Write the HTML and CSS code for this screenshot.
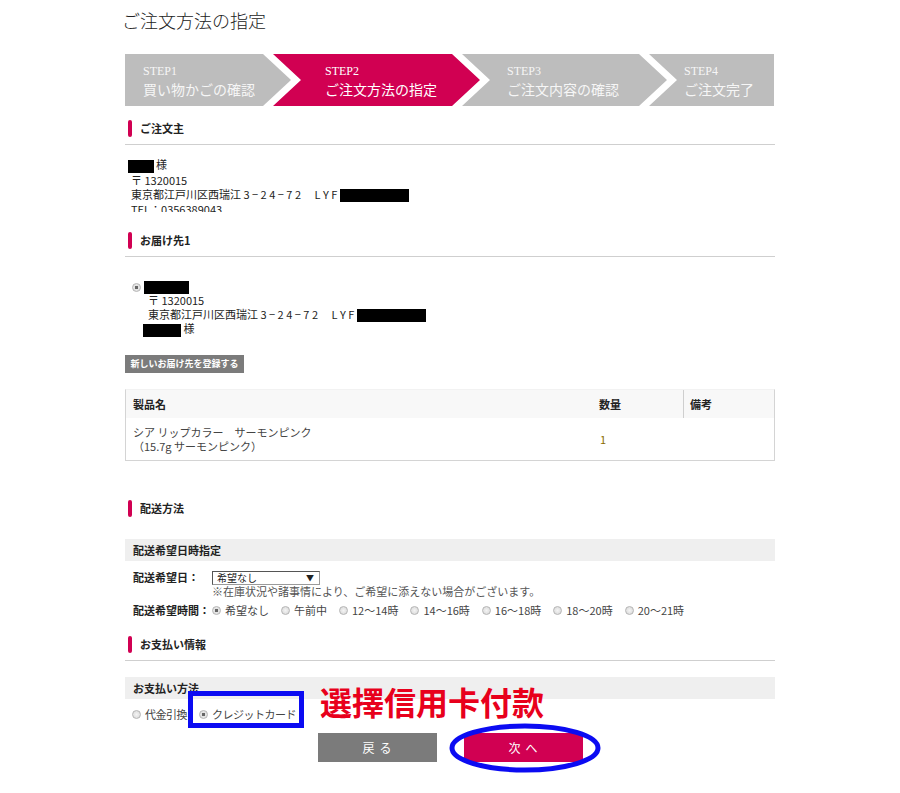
FILE: index.html
```html
<!DOCTYPE html>
<html lang="ja">
<head>
    <meta charset="UTF-8">
    <meta name="viewport" content="width=device-width, initial-scale=1.0">
    <title>ご注文方法の指定</title>
    <link rel="stylesheet" href="styles.css">
</head>
<body>
    <div class="page">
        <h1 class="page-title">ご注文方法の指定</h1>

        <ol class="steps">
            <li class="step">
                <span class="step-no">STEP1</span>
                <span class="step-label">買い物かごの確認</span>
            </li>
            <li class="step current">
                <span class="step-no">STEP2</span>
                <span class="step-label">ご注文方法の指定</span>
            </li>
            <li class="step">
                <span class="step-no">STEP3</span>
                <span class="step-label">ご注文内容の確認</span>
            </li>
            <li class="step">
                <span class="step-no">STEP4</span>
                <span class="step-label">ご注文完了</span>
            </li>
        </ol>

        <!-- ご注文主 -->
        <h2 class="sec-head">ご注文主</h2>
        <div class="orderer">
            <div class="orderer-lines">
                <div><span class="redact redact-name"></span>様</div>
                <div class="indent">〒 1320015</div>
                <div class="indent">東京都江戸川区西瑞江 3 − 2 4 − 7 2 　L Y F <span class="redact redact-addr"></span></div>
                <div class="indent">TEL：0356389043</div>
            </div>
        </div>

        <!-- お届け先 -->
        <h2 class="sec-head">お届け先1</h2>
        <div class="delivery">
            <div class="delivery-top"><span class="radio checked"></span><span class="redact redact-dname"></span></div>
            <div class="delivery-body">
                <div>〒 1320015</div>
                <div>東京都江戸川区西瑞江 3 − 2 4 − 7 2 　L Y F <span class="redact redact-addr"></span></div>
                <div class="dname-row"><span class="redact redact-short"></span> 様</div>
            </div>
        </div>
        <button class="btn-small">新しいお届け先を登録する</button>

        <div class="items">
            <div class="items-row items-head">
                <div class="cell">製品名</div>
                <div class="cell">数量</div>
                <div class="cell cell-notes">備考</div>
            </div>
            <div class="items-row items-body">
                <div class="cell">シア リップカラー　サーモンピンク<br>（15.7g サーモンピンク）</div>
                <div class="cell qty">1</div>
                <div class="cell"></div>
            </div>
        </div>

        <!-- 配送方法 -->
        <h2 class="sec-head no-line">配送方法</h2>
        <div class="bar-title">配送希望日時指定</div>
        <div class="form-row">
            <div class="form-label">配送希望日：</div>
            <div class="form-value">
                <div class="select">希望なし<span class="select-arrow">▼</span></div>
                <div class="note">※在庫状況や諸事情により、ご希望に添えない場合がございます。</div>
            </div>
        </div>
        <div class="form-row row-time">
            <div class="form-label">配送希望時間：</div>
            <div class="form-value options">
                <span class="option"><span class="radio checked"></span>希望なし</span>
                <span class="option"><span class="radio"></span>午前中</span>
                <span class="option"><span class="radio"></span>12～14時</span>
                <span class="option"><span class="radio"></span>14～16時</span>
                <span class="option"><span class="radio"></span>16～18時</span>
                <span class="option"><span class="radio"></span>18～20時</span>
                <span class="option"><span class="radio"></span>20～21時</span>
            </div>
        </div>

        <!-- お支払い情報 -->
        <h2 class="sec-head pay-head">お支払い情報</h2>
        <div class="bar-title pay-title">お支払い方法</div>
        <div class="pay-row">
            <span class="option"><span class="radio"></span>代金引換</span>
            <span class="option"><span class="radio checked"></span>クレジットカード</span>
        </div>

        <div class="actions">
            <button class="btn btn-back">戻る</button>
            <button class="btn btn-next">次へ</button>
        </div>

        <!-- annotations drawn over the screenshot -->
        <div class="mark-box"></div>
        <div class="mark-text">選擇信用卡付款</div>
        <svg class="mark-ellipse" width="154" height="52" viewBox="0 0 154 52">
            <ellipse cx="77" cy="26" rx="73" ry="22" fill="none" stroke="#0b0bf2" stroke-width="5"/>
        </svg>
    </div>
</body>
</html>
```

FILE: styles.css
```css
body {
    margin: 0;
    background-color: #fff;
    color: #333;
    font-family: 'Noto Sans CJK JP', 'Liberation Sans', sans-serif;
    font-size: 11px;
}

.page {
    position: relative;
    width: 650px;
    margin: 0 auto;
    height: 793px;
}

.page-title {
    margin: 0 0 0 -3px;
    padding-top: 8px;
    font-size: 18px;
    line-height: 24px;
    font-weight: 300;
    color: #222;
}

/* step bar */
.steps {
    display: flex;
    list-style: none;
    margin: 22px 0 0;
    padding: 0;
    height: 52px;
}

.step {
    display: flex;
    flex-direction: column;
    justify-content: center;
    box-sizing: border-box;
    height: 52px;
    margin-left: -18px;
    padding-left: 48px;
    background-color: #bdbdbd;
    color: #f6f6f6;
    clip-path: polygon(0 0, calc(100% - 28px) 0, 100% 50%, calc(100% - 28px) 100%, 0 100%, 28px 50%);
}

.step:nth-child(1) {
    width: 166px;
    margin-left: 0;
    padding-left: 18px;
    clip-path: polygon(0 0, calc(100% - 28px) 0, 100% 50%, calc(100% - 28px) 100%, 0 100%);
}

.step:nth-child(2) {
    width: 207px;
    padding-left: 52px;
}

.step:nth-child(3) {
    width: 205px;
    padding-left: 45px;
}

.step:nth-child(4) {
    width: 125px;
    padding-left: 35px;
    clip-path: polygon(0 0, 100% 0, 100% 100%, 0 100%, 28px 50%);
}

.step.current {
    background-color: #d10052;
    color: #fff;
}

.step-no {
    font-family: 'Liberation Serif', serif;
    font-size: 12px;
    line-height: 15px;
    margin-top: 2px;
}

.step-label {
    font-size: 14px;
    line-height: 20px;
}

/* section heading */
.sec-head {
    position: relative;
    margin: 10px 0 0;
    padding: 4px 0 7px 15px;
    font-size: 11px;
    line-height: 17px;
    font-weight: bold;
    color: #222;
    border-bottom: 1px solid #cfcfcf;
}

.sec-head::before {
    content: '';
    position: absolute;
    left: 3px;
    top: 4px;
    width: 4px;
    height: 17px;
    border-radius: 2px;
    background-color: #d10052;
}

.sec-head.no-line {
    border-bottom: none;
    margin-top: 35px;
}

.sec-head.pay-head {
    margin-top: 15px;
}

.redact {
    display: inline-block;
    background-color: #000;
    vertical-align: middle;
}

.redact-name {
    width: 26px;
    height: 13px;
    margin-left: 3px;
    margin-right: 2px;
}

.redact-addr {
    width: 69px;
    height: 13px;
}

.redact-dname {
    width: 45px;
    height: 13px;
    margin-left: 3px;
}

.redact-short {
    width: 38px;
    height: 13px;
}

.orderer {
    padding: 12px 0 6px;
    line-height: 14px;
    color: #222;
}

.orderer-lines {
    height: 55px;
    overflow: hidden;
}

.orderer .indent {
    padding-left: 6px;
}

.delivery {
    padding: 24px 0 0 7px;
    line-height: 13.5px;
    color: #222;
}

.delivery-top {
    display: flex;
    align-items: center;
}

.delivery-body {
    padding-left: 16px;
}

.dname-row {
    margin-left: -5px;
}

.btn-small {
    display: block;
    margin-top: 18px;
    width: 119px;
    height: 18px;
    padding: 0;
    border: none;
    background-color: #7b7b7b;
    color: #fff;
    font-family: inherit;
    font-size: 9px;
    font-weight: bold;
}

/* items table */
.items {
    margin-top: 16px;
    border: 1px solid #d4d4d4;
    border-top-color: #f2f2f2;
}

.items-row {
    display: grid;
    grid-template-columns: 466px 91px 1fr;
}

.items-head {
    height: 28px;
    background-color: #f8f8f8;
    font-weight: bold;
    color: #222;
}

.items-head .cell {
    display: flex;
    align-items: center;
}

.items-head .cell-notes {
    border-left: 1px solid #cfcfcf;
    padding-left: 6px;
}

.cell {
    padding-left: 7px;
}

.items-body {
    height: 42px;
    align-items: center;
    line-height: 14px;
    color: #444;
}

.items-body .qty {
    padding-left: 8px;
    color: #8a6a00;
}

/* forms */
.bar-title {
    margin-top: 15px;
    height: 22px;
    line-height: 22px;
    padding-left: 8px;
    background-color: #efefef;
    font-weight: bold;
    color: #222;
}

.form-row {
    display: flex;
    padding-left: 8px;
    margin-top: 10px;
    line-height: 13px;
}

.form-label {
    width: 79px;
    font-weight: bold;
    color: #222;
}

.select {
    display: flex;
    justify-content: space-between;
    align-items: center;
    box-sizing: border-box;
    width: 108px;
    height: 14px;
    padding: 0 5px 0 4px;
    border: 1px solid #9a9a9a;
    border-left-color: #555;
    border-top-color: #555;
    font-size: 10px;
    line-height: 12px;
    color: #222;
}

.select-arrow {
    font-size: 8px;
}

.note {
    color: #555;
}

.form-row.row-time {
    margin-top: 6px;
}

.options {
    display: flex;
    gap: 12px;
    color: #444;
}

.option {
    display: inline-flex;
    align-items: center;
    gap: 4px;
}

.radio {
    display: inline-block;
    box-sizing: border-box;
    width: 9px;
    height: 9px;
    border: 1px solid #b5b5b5;
    border-radius: 50%;
    background: radial-gradient(circle, #f4f4f4 0, #d6d6d6 100%);
}

.radio.checked {
    background: radial-gradient(circle, #666 0, #666 30%, #e4e4e4 38%);
}

.sec-head + .pay-title {
    margin-top: 16px;
}

.pay-row {
    display: flex;
    gap: 12px;
    padding-left: 7px;
    margin-top: 9px;
    line-height: 13px;
    letter-spacing: -0.5px;
    color: #444;
}

.actions {
    display: flex;
    justify-content: center;
    gap: 27px;
    margin-top: 12px;
}

.btn {
    width: 119px;
    height: 29px;
    border: none;
    color: #fff;
    font-family: inherit;
    font-size: 12px;
    letter-spacing: 5px;
    padding: 0 0 0 5px;
}

.btn-back {
    background-color: #7b7b7b;
}

.btn-next {
    background-color: #d10052;
}

/* annotations */
.mark-box {
    position: absolute;
    left: 63px;
    top: 691px;
    width: 116px;
    height: 37px;
    box-sizing: border-box;
    border: 5px solid #0b0bf2;
}

.mark-text {
    position: absolute;
    left: 195px;
    top: 682px;
    font-family: 'Noto Sans CJK TC', sans-serif;
    font-size: 32px;
    line-height: 38px;
    font-weight: bold;
    color: #e8001c;
    white-space: nowrap;
}

.mark-ellipse {
    position: absolute;
    left: 323px;
    top: 722px;
}
```
